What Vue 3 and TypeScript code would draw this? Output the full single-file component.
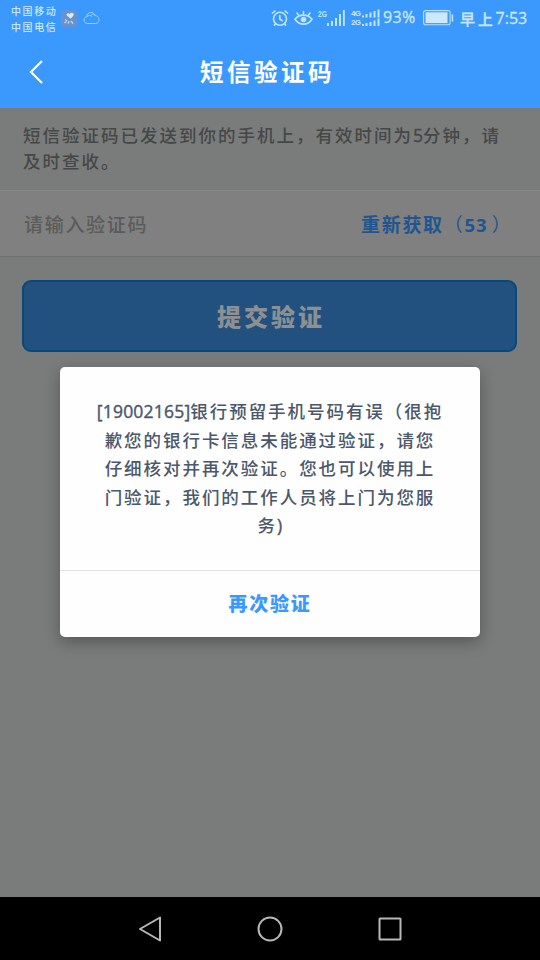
<script setup lang="ts">
import { ref } from 'vue'

interface Part {
  text: string
  kind?: 'num' | 'open'
}

const notice = ref<Part[][]>([
  [{ text: '短信验证码已发送到你的手机上，有效时间为' }, { text: '5', kind: 'num' }, { text: '分钟，请' }],
  [{ text: '及时查收。' }],
])

const message = ref<Part[][]>([
  [{ text: '[19002165]', kind: 'num' }, { text: '银行预留手机号码有误' }, { text: '（', kind: 'open' }, { text: '很抱' }],
  [{ text: '歉您的银行卡信息未能通过验证，请您' }],
  [{ text: '仔细核对并再次验证。您也可以使用上' }],
  [{ text: '门验证，我们的工作人员将上门为您服' }],
  [{ text: '务' }, { text: ')', kind: 'num' }],
])

const seconds = ref(53)
</script>

<template>
  <div class="screen">
    <header class="top">
      <div class="status">
        <div class="carriers"><span>中国移动</span><span>中国电信</span></div>
        <svg class="app-icon" width="16" height="17" viewBox="0 0 16 17">
          <rect width="16" height="17" rx="3" fill="#6792cf" />
          <path d="M9.5 8.8 5.8 5.6C4.7 4 6.8 2.2 8.800 4c1-2 4.400-1.400 3.900.8-.2 1.500-2 2.700-3.200 4z" fill="#d5eafb" />
          <path d="M4 9.500l2 1.200M3.500 13l2-1.500M7 13.500l1.300-2.200M10 11l2 2.500" stroke="#c4ddf5" stroke-width="1.300" />
        </svg>
        <svg class="cloud" width="17" height="14" viewBox="0 0 17 14" fill="none" stroke="#9bcffb" stroke-width="1">
          <path d="M4.200 12.500C-.2 12 .2 6 3.600 5.800 4 .4 11 .2 12.200 4.600c5 .2 5 7.600.6 7.900zM3.600 5.800C5.400 3.900 8 4 9.200 5.800M8.500 3.800c1-.9 3-.5 3.700.8" />
        </svg>
        <div class="spacer"></div>
        <svg class="alarm" width="18" height="18" viewBox="0 0 18 18" fill="none" stroke="#c3e4fc" stroke-width="1.600">
          <circle cx="9" cy="9.800" r="6.500" />
          <path d="M8.800 6v4l3 2.200M1 4.500 4.500 1.500M13.500 1.500 17 4.500M4.400 15 3 16.600M13.600 15l1.400 1.600" />
        </svg>
        <svg class="eye" width="19" height="18" viewBox="0 0 19 18" fill="none" stroke="#c3e4fc" stroke-width="1.600">
          <path d="M1 10.200C5.500 4.800 13.500 4.800 18 10.200 13.500 16.800 5.500 16.800 1 10.200zM9.500 5.500V2M4.800 6.500 2.600 3.600M14.200 6.500l2.200-2.900" />
          <circle cx="9.500" cy="10.500" r="2.800" fill="#c3e4fc" stroke="none" />
        </svg>
        <svg class="signal" width="28" height="20" viewBox="0 0 28 20" fill="#c3e4fc">
          <text x="0" y="8.500" class="net" textLength="9" lengthAdjust="spacingAndGlyphs">2G</text>
          <path d="M9 15h2v3H9zM13 13h2v5h-2zM17 10h2v8h-2zM21 6h2v12h-2zM25 2h1.800v16H25z" />
        </svg>
        <div class="signal-dual">
          <div class="nets"><span>4G</span><span>2G</span></div>
          <svg width="18" height="20" viewBox="11 0 18 20" fill="#c3e4fc">
            <path d="M11 7.500h2v2h-2zM14.500 6h2v3.500h-2zM18.500 4.500h2v5h-2zM22.500 3h2v6.500h-2zM26.500 1.500h2v8h-2zM11 16h2v2h-2zM14.500 15h2v3h-2zM18.500 14h2v4h-2zM22.500 12.500h2V18h-2zM26.500 10.500h2V18h-2z" />
          </svg>
        </div>
        <span class="percent">93%</span>
        <svg class="battery" width="31" height="16" viewBox="0 0 31 16">
          <rect x=".6" y=".6" width="26.500" height="14.200" rx="2" fill="none" stroke="#b9defd" stroke-width="1.100" />
          <rect x="2.500" y="2.300" width="22" height="10.800" fill="#cde7fc" />
          <path d="M28.600 4.500h1.600v7h-1.600z" fill="#c3e4fc" />
        </svg>
        <span class="clock"><span class="ampm">早上</span>7:53</span>
      </div>
      <div class="nav">
        <svg class="back" width="16" height="26" viewBox="0 0 16 26" fill="none" stroke="#fff" stroke-width="2.200">
          <path d="M14 2 3 13l11 11" />
        </svg>
        <h1>短信验证码</h1>
      </div>
    </header>

    <main>
      <div class="notice">
        <p v-for="(line, i) in notice" :key="i"><span v-for="(part, j) in line" :key="j" :class="part.kind">{{ part.text }}</span></p>
      </div>
      <div class="code-row">
        <span class="placeholder">请输入验证码</span>
        <span class="resend">重新获取<span class="paren">（</span><span class="sec">{{ seconds }}</span><span class="paren">）</span></span>
      </div>
      <button class="submit">提交验证</button>
      <section class="dialog">
        <div class="message">
          <p v-for="(line, i) in message" :key="i"><span v-for="(part, j) in line" :key="j" :class="part.kind">{{ part.text }}</span></p>
        </div>
        <div class="confirm">再次验证</div>
      </section>
    </main>

    <footer>
      <svg width="24" height="28" viewBox="0 0 24 28"><path d="M22 2.500v23L2 14z" /></svg>
      <svg width="28" height="28" viewBox="0 0 28 28"><circle cx="14" cy="14" r="11.500" /></svg>
      <svg width="24" height="28" viewBox="0 0 24 28"><rect x="1.500" y="3.500" width="21" height="21" rx=".5" /></svg>
    </footer>
  </div>
</template>

<style>
body {
  margin: 0;
}
</style>

<style scoped>
.screen {
  width: 540px;
  height: 960px;
  display: flex;
  flex-direction: column;
  overflow: hidden;
  background: #7a7c7b;
  font-family: 'Open Sans', 'Noto Sans CJK SC', sans-serif;
  white-space: nowrap;
}
p,
h1 {
  margin: 0;
}
.top {
  height: 108px;
  background: #3b99fe;
  flex: none;
}
.status {
  height: 36px;
  display: flex;
  align-items: center;
  padding: 0 12px 0 11px;
  color: #cbe7fd;
}
.carriers {
  display: flex;
  flex-direction: column;
  width: 50px;
  font-size: 10px;
  line-height: 16px;
  letter-spacing: 1.600px;
  font-weight: 500;
  padding-top: 2px;
}
.cloud {
  margin-left: 6px;
}
.spacer {
  flex: 1;
}
.eye {
  margin-left: 5px;
}
.signal {
  margin-left: 5px;
}
.signal-dual {
  margin-left: 5px;
  width: 29px;
  display: flex;
  justify-content: space-between;
}
.nets {
  display: flex;
  flex-direction: column;
  justify-content: center;
  width: 10px;
  font: 700 8px/9px 'Liberation Sans', sans-serif;
  letter-spacing: -0.800px;
}
.net {
  font: 700 9px 'Liberation Sans', sans-serif;
}
.percent {
  width: 36px;
  margin-left: 3px;
  font-size: 16px;
  line-height: 20px;
  padding-bottom: 2px;
  letter-spacing: 0.300px;
  -webkit-text-stroke: 0.300px;
}
.battery {
  margin-left: 4px;
}
.clock {
  margin-left: 6px;
  width: 68px;
  display: flex;
  align-items: center;
  font-size: 16px;
  font-weight: 500;
  letter-spacing: 0;
  -webkit-text-stroke: 0.300px;
}
.ampm {
  font-size: 15px;
  letter-spacing: 2.800px;
}
.nav {
  height: 72px;
  display: flex;
  align-items: center;
  padding-left: 28px;
}
.back {
  flex: none;
}
h1 {
  flex: 1;
  padding-left: 156px;
  color: #fff;
  font-size: 23.500px;
  line-height: 34px;
  font-weight: 700;
  letter-spacing: 3.500px;
}
main {
  height: 789px;
  display: flex;
  flex-direction: column;
}
.notice {
  height: 82px;
  box-sizing: border-box;
  padding: 14px 0 0 23px;
  color: #464747;
  font-size: 17.500px;
  line-height: 26px;
  letter-spacing: 2px;
  font-weight: 500;
}
.num {
  -webkit-text-stroke: 0.400px;
}
.notice .num {
  letter-spacing: 0;
}
.code-row {
  height: 67px;
  box-sizing: border-box;
  border-top: 1px solid #868888;
  border-bottom: 1px solid #707272;
  background: #808080;
  display: flex;
  align-items: center;
  justify-content: space-between;
  padding: 0 28px 0 24px;
  font-size: 19px;
  letter-spacing: 1.700px;
}
.placeholder {
  color: #5b5b5b;
  font-weight: 500;
}
.resend {
  width: 151px;
  color: #20558f;
  font-weight: 700;
}
.paren {
  font-weight: 400;
}
.sec {
  margin: 0 4px 0 0;
  font-size: 18.500px;
  letter-spacing: 1px;
}
.submit {
  width: 495px;
  height: 72px;
  margin: 23px 0 0 22px;
  flex: none;
  padding: 0 0 2px 3px;
  border: 2px solid #074978;
  border-radius: 9px;
  background: #22507f;
  color: #8d9092;
  font-family: inherit;
  font-size: 24px;
  font-weight: 900;
  letter-spacing: 3px;
}
.dialog {
  width: 420px;
  height: 270px;
  flex: none;
  margin: 15px 0 0 60px;
  border-radius: 5px;
  background: #fefefe;
  box-shadow: 0 5px 16px rgba(0, 0, 0, 0.3);
}
.message {
  height: 204px;
  box-sizing: border-box;
  padding-top: 30px;
  border-bottom: 1px solid #e1e3e4;
  text-align: center;
  color: #4b576b;
  font-size: 17.500px;
  line-height: 28.500px;
  letter-spacing: 1.950px;
  font-weight: 500;
}
.message p {
  height: 28.500px;
}
.message .num {
  font-size: 17.500px;
  letter-spacing: 0.200px;
}
.confirm {
  line-height: 66px;
  text-align: center;
  color: #3b99fe;
  font-size: 19px;
  font-weight: 900;
  letter-spacing: 1.800px;
}
footer {
  flex: 1;
  background: #000;
  display: flex;
  align-items: center;
  justify-content: center;
  gap: 94px;
}
footer svg {
  fill: none;
  stroke: #b8b8b8;
  stroke-width: 2;
  stroke-linejoin: round;
}
</style>
